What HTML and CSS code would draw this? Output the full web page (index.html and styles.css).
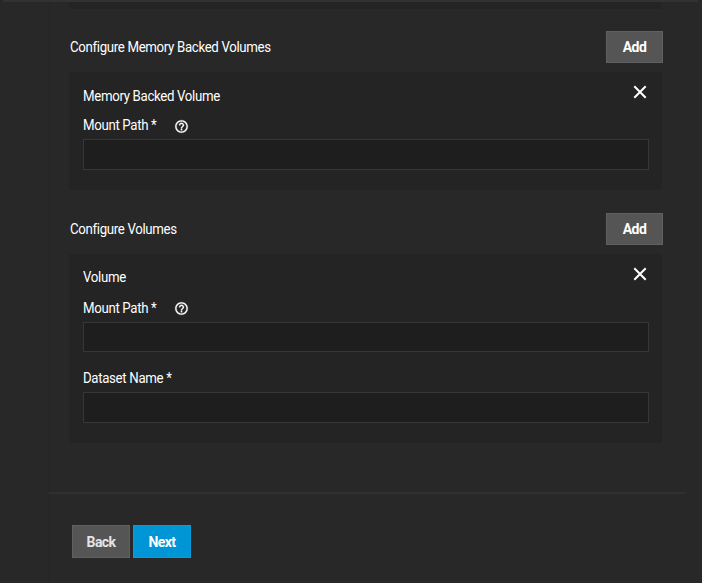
FILE: index.html
```html
<!DOCTYPE html>
<html lang="en">
<head>
<meta charset="utf-8">
<title>Configure Volumes</title>
<link rel="stylesheet" href="styles.css">
</head>
<body>
<svg class="defs" aria-hidden="true">
  <symbol id="help" viewBox="0 0 24 24"><path d="M11 18h2v-2h-2v2zm1-16C6.480 2 2 6.480 2 12s4.480 10 10 10 10-4.480 10-10S17.520 2 12 2zm0 18c-4.410 0-8-3.590-8-8s3.590-8 8-8 8 3.590 8 8-3.590 8-8 8zm0-14c-2.210 0-4 1.790-4 4h2c0-1.100.9-2 2-2s2 .9 2 2c0 2-3 1.750-3 5h2c0-2.250 3-2.500 3-5 0-2.210-1.790-4-4-4z"/></symbol>
  <symbol id="close" viewBox="0 0 14 14"><path d="M1.300 1.300 12.700 12.700M12.700 1.300 1.300 12.700"/></symbol>
</svg>
<main class="wizard">
  <div class="step">
    <div class="panel panel-tail"></div>
    <div class="section-head head-memory"><h2>Configure Memory Backed Volumes</h2><button class="btn add">Add</button></div>
    <section class="panel memory">
      <div class="panel-head"><h3>Memory Backed Volume</h3><svg class="close"><use href="#close"/></svg></div>
      <label class="field"><span class="caption"><span class="name">Mount Path *</span><svg class="help"><use href="#help"/></svg></span><input type="text"></label>
    </section>
    <div class="section-head head-volumes"><h2>Configure Volumes</h2><button class="btn add">Add</button></div>
    <section class="panel volumes">
      <div class="panel-head"><h3>Volume</h3><svg class="close"><use href="#close"/></svg></div>
      <label class="field"><span class="caption"><span class="name">Mount Path *</span><svg class="help"><use href="#help"/></svg></span><input type="text"></label>
      <label class="field dataset"><span class="caption"><span class="name">Dataset Name *</span></span><input type="text"></label>
    </section>
    <footer class="actions"><button class="btn back">Back</button><button class="btn next">Next</button></footer>
  </div>
</main>
</body>
</html>
```
FILE: styles.css
```css
* { box-sizing: border-box; }
body { margin: 0; background: #282828; color: #fff; font: 400 14px/20px Roboto, sans-serif; letter-spacing: -0.35px; overflow: hidden; }
h2, h3 { margin: 0; font-size: inherit; font-weight: 400; line-height: 20px; }
h2, h3, .name { transform: scaleX(0.946); transform-origin: 0 50%; white-space: nowrap; }
.defs { position: absolute; width: 0; height: 0; }
.wizard { height: 583px; margin: 0 4px 0 3px; border-top: 2px solid #323232; }
.step { height: 581px; margin: 0 13px 0 46px; border-left: 1px solid #242424; }
.panel { width: 593px; margin-left: 19px; padding: 14px 14px 0; background: #242424; }
.panel-tail { height: 7px; padding: 0; }
.section-head { display: flex; justify-content: space-between; align-items: center; width: 593px; height: 32px; margin-left: 20px; }
.head-memory { margin-top: 22px; }
.head-volumes { margin-top: 23px; }
.memory { height: 118px; margin-top: 9px; }
.volumes { height: 189px; margin-top: 9px; }
.panel-head { display: flex; justify-content: space-between; height: 29px; }
.volumes .panel-head { height: 30px; }
.volumes h3 { line-height: 18px; }
.close { width: 14px; height: 14px; margin: -1px 1px 0 0; fill: none; stroke: #fff; stroke-width: 2; }
.field { display: block; }
.caption { display: flex; align-items: center; height: 24px; padding-bottom: 4px; }
.name { width: 91px; }
.help { width: 15px; height: 15px; margin-top: 3px; fill: #fff; stroke: #fff; stroke-width: 0.5; }
.volumes .help { margin-top: 1px; }
input { display: block; width: 566px; height: 31px; border: 1px solid #373737; background: #1e1e1e; outline: 0; color: #fff; }
.volumes input { height: 30px; }
.volumes .dataset input { height: 31px; }
.dataset { margin-top: 16px; }
.dataset .caption { padding-bottom: 5px; }
.btn { width: 58px; height: 33px; padding: 0; border: 1px solid #606060; background: #555; color: #e4e4e4; font: 700 14px/20px Roboto, sans-serif; letter-spacing: -0.6px; }
.add { width: 57px; height: 32px; color: #fff; }
.actions { display: flex; gap: 3px; height: 91px; margin: 49px 0 0 -1px; padding: 31px 0 0 23px; border-top: 2px solid #303030; }
.next { border-color: #0a9bdd; background: #0095d5; color: #fff; }
```
